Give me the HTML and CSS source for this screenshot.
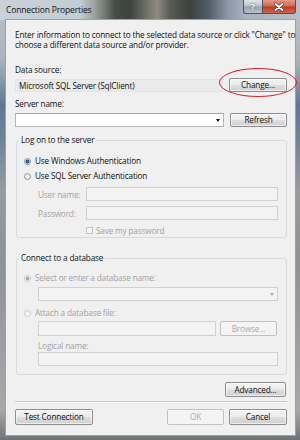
FILE: index.html
```html
<!DOCTYPE html>
<html>
<head>
<meta charset="utf-8">
<link rel="stylesheet" href="styles.css">
</head>
<body>
<div class="window">
  <div class="titlebar">
    <span class="title">Connection Properties</span>
    <div class="caption">
      <span class="cap-btn help">?</span>
      <span class="cap-btn close"><svg width="12" height="10" viewBox="0 0 12 10"><path d="M2.5 2 L9.5 8 M9.5 2 L2.5 8" stroke="#4a2a22" stroke-width="3.2" stroke-linecap="round"/><path d="M2.5 2 L9.5 8 M9.5 2 L2.5 8" stroke="#ffffff" stroke-width="2" stroke-linecap="round"/></svg></span>
    </div>
  </div>
  <div class="client">
    <p class="intro">Enter information to connect to the selected data source or click "Change" to<br>choose a different data source and/or provider.</p>
    <div class="label l-ds">Data source:</div>
    <div class="row r-ds">
      <div class="readonly">Microsoft SQL Server (SqlClient)</div>
      <button class="btn w58">Change...</button>
    </div>
    <div class="label l-sn">Server name:</div>
    <div class="row r-sn">
      <div class="tb combo"><span class="arrow"></span></div>
      <button class="btn w57">Refresh</button>
    </div>
    <fieldset class="group g-logon">
      <legend>Log on to the server</legend>
      <div class="opt"><span class="radio on"></span>Use Windows Authentication</div>
      <div class="opt o-sql"><span class="radio"></span>Use SQL Server Authentication</div>
      <div class="field f-user"><span class="flabel">User name:</span><div class="tb dis"></div></div>
      <div class="field f-pass"><span class="flabel">Password:</span><div class="tb dis"></div></div>
      <div class="check"><span class="box"></span>Save my password</div>
    </fieldset>
    <fieldset class="group g-db">
      <legend>Connect to a database</legend>
      <div class="opt dis"><span class="radio on"></span>Select or enter a database name:</div>
      <div class="tb dis combo indent c-db"><span class="arrow"></span></div>
      <div class="opt dis o-attach"><span class="radio"></span>Attach a database file:</div>
      <div class="row indent r-file">
        <div class="tb dis"></div>
        <button class="btn w57 dis">Browse...</button>
      </div>
      <div class="label dis indent l-log">Logical name:</div>
      <div class="tb dis indent t-log"></div>
    </fieldset>
    <div class="adv-row"><button class="btn adv">Advanced...</button></div>
    <div class="sep"></div>
    <div class="bottom-row">
      <button class="btn test">Test Connection</button>
      <button class="btn w57 dis ok">OK</button>
      <button class="btn w58">Cancel</button>
    </div>
  </div>
  <div class="ring"></div>
</div>
</body>
</html>
```

FILE: styles.css
```css
html, body {
  margin: 0;
  padding: 0;
}
body {
  width: 300px;
  height: 440px;
  overflow: hidden;
  font-family: "Open Sans", "Noto Sans", sans-serif;
  font-size: 8.2px;
  letter-spacing: -0.15px;
  color: #111;
}
.window {
  position: relative;
  width: 300px;
  height: 440px;
  box-sizing: border-box;
  padding: 0 4px 4px 5px;
  display: flex;
  flex-direction: column;
  background:
    linear-gradient(to right, #c9d1d9 0px, #c4ccd4 80px, #9aa09c 95px, #464d47 115px, #3c423d 130px, #6a6d64 145px, #8f8c82 157px, #585b53 170px, #3b413d 190px, #55606c 210px, #8e98a8 228px, #aab2bf 245px, #b8bfc9 300px) top left / 100% 20px no-repeat,
    linear-gradient(to bottom, #bcc4cc 0px, #a9b3bd 60px, #5f7891 105px, #6d8297 135px, #959ba2 190px, #8d9297 260px, #9b9ea2 340px, #a6a8ab 410px, #6f7276 440px);
}
.titlebar {
  height: 19px;
  display: flex;
  align-items: flex-start;
}
.title {
  margin-left: 1px;
  line-height: 20px;
  font-size: 8.5px;
  color: #111;
}
.caption {
  margin-left: auto;
  display: flex;
}
.cap-btn {
  height: 14px;
  box-sizing: border-box;
  border: 1px solid #4b535c;
  border-top: none;
  display: flex;
  align-items: center;
  justify-content: center;
}
.help {
  width: 19px;
  border-right: none;
  border-radius: 0 0 0 3px;
  background: linear-gradient(#dfe5ec, #b8c1cb 48%, #96a2ae 52%, #b9c3cd);
  color: #fff;
  font-weight: bold;
  font-size: 9px;
  letter-spacing: 0;
  text-shadow: 0 0 2px #333;
}
.close {
  width: 34px;
  border-radius: 0 0 3px 0;
  background: linear-gradient(#e49a88, #d0674f 48%, #bd3b22 52%, #d0664a);
}
.client {
  flex: 1;
  border: 1px solid #98a2ac;
  background: #f0f0f0;
  padding: 10px 8px 0 9px;
  display: flex;
  flex-direction: column;
}
.intro {
  margin: 0;
  line-height: 10px;
  height: 20px;
  white-space: nowrap;
}
.label {
  line-height: 10px;
  height: 10px;
}
.l-ds { margin-top: 15px; }
.l-sn { margin-top: 7px; }
.row {
  display: flex;
  gap: 6px;
  height: 14px;
}
.r-ds { margin-top: 3px; }
.r-sn { margin-top: 4px; }
.readonly {
  flex: 1;
  height: 13px;
  margin-top: 1px;
  box-sizing: border-box;
  background: #eaeaea;
  border: 1px solid #e3e3e3;
  padding-left: 3px;
  line-height: 11px;
}
.btn {
  font: inherit;
  letter-spacing: inherit;
  color: #111;
  height: 100%;
  box-sizing: border-box;
  padding: 0;
  margin: 0;
  border: 1px solid #8c8e90;
  border-radius: 2px;
  background: linear-gradient(#f4f4f4, #ececec 48%, #dedede 52%, #d0d0d0);
  box-shadow: inset 0 0 0 1px rgba(255,255,255,0.6);
  line-height: 12px;
}
.w58 { width: 58px; }
.w57 { width: 57px; }
.btn.dis {
  color: #a8a8a8;
  border-color: #bfc2c4;
  background: #f4f4f4;
  box-shadow: none;
}
.tb {
  flex: 1;
  height: 14px;
  box-sizing: border-box;
  background: #fff;
  border: 1px solid #b5b8be;
  border-top-color: #9fa3a9;
}
.tb.dis {
  background: #f3f3f3;
  border-color: #cfd1d3;
}
.combo {
  display: flex;
  justify-content: flex-end;
  align-items: center;
  padding-right: 3px;
}
.arrow {
  width: 0;
  height: 0;
  border-left: 2.5px solid transparent;
  border-right: 2.5px solid transparent;
  border-top: 3px solid #111;
}
.tb.dis .arrow {
  border-top-color: #b0b0b0;
}
.group {
  margin: 0 0 0 1px;
  border: 1px solid #d5dbe0;
  border-radius: 3px;
  padding: 11px 8px 2px 7px;
  min-width: 0;
  display: flex;
  flex-direction: column;
}
.group legend {
  line-height: 10px;
  padding: 0 2px;
  margin-left: -5px;
  color: #111;
}
.g-logon { margin-top: 8px; }
.g-db {
  margin-top: 15px;
  padding-top: 10px;
  padding-bottom: 8px;
}
.opt {
  display: flex;
  align-items: center;
  height: 10px;
  line-height: 10px;
}
.o-sql { margin-top: 5px; }
.opt.dis { color: #a3a3a3; }
.radio {
  width: 7px;
  height: 7px;
  box-sizing: border-box;
  border-radius: 50%;
  border: 1px solid #8e959c;
  background: radial-gradient(circle at 40% 35%, #ffffff, #dfe3e7);
  margin-right: 4px;
  position: relative;
}
.radio.on {
  background: radial-gradient(circle, #3d7ac4 0, #1d4f93 1.6px, #cfd8e2 2.2px, #f4f6f8 3px);
}
.opt.dis .radio {
  border-color: #c4c8cc;
  background: #f4f4f4;
}
.opt.dis .radio.on {
  background: radial-gradient(circle, #a9a9a9 0, #a9a9a9 1.5px, #f4f4f4 2.2px);
}
.field {
  display: flex;
  align-items: center;
  height: 14px;
  padding-left: 14px;
}
.f-user { margin-top: 6px; }
.f-pass { margin-top: 5px; }
.flabel {
  width: 48px;
  color: #a3a3a3;
}
.check {
  display: flex;
  align-items: center;
  height: 10px;
  margin-top: 5px;
  padding-left: 62px;
  color: #a3a3a3;
}
.box {
  width: 7px;
  height: 7px;
  box-sizing: border-box;
  border: 1px solid #c2c5c8;
  background: #f6f6f6;
  margin-right: 3px;
}
.indent { margin-left: 14px; }
.c-db {
  flex: none;
  margin-top: 4px;
}
.o-attach { margin-top: 7px; }
.r-file {
  margin-top: 3px;
  height: 15px;
  gap: 4px;
  margin-right: 1px;
}
.r-file .tb { height: 15px; }
.l-log {
  margin-top: 5px;
  color: #a3a3a3;
}
.t-log {
  flex: none;
  margin-top: 1px;
}
.adv-row {
  display: flex;
  justify-content: flex-end;
  height: 15px;
  margin-top: 7px;
  padding-right: 1px;
}
.adv { width: 61px; }
.sep {
  margin-top: 4px;
  height: 0;
  border-top: 1px solid #c9c9c9;
  border-bottom: 1px solid #fbfbfb;
}
.bottom-row {
  display: flex;
  gap: 5px;
  height: 16px;
  margin-top: 6px;
}
.test { width: 78px; }
.ok { margin-left: auto; }
.ring {
  position: absolute;
  left: 219px;
  top: 68px;
  width: 78px;
  height: 29px;
  box-sizing: border-box;
  border: 1.5px solid #d8232a;
  border-radius: 50%;
}
```
